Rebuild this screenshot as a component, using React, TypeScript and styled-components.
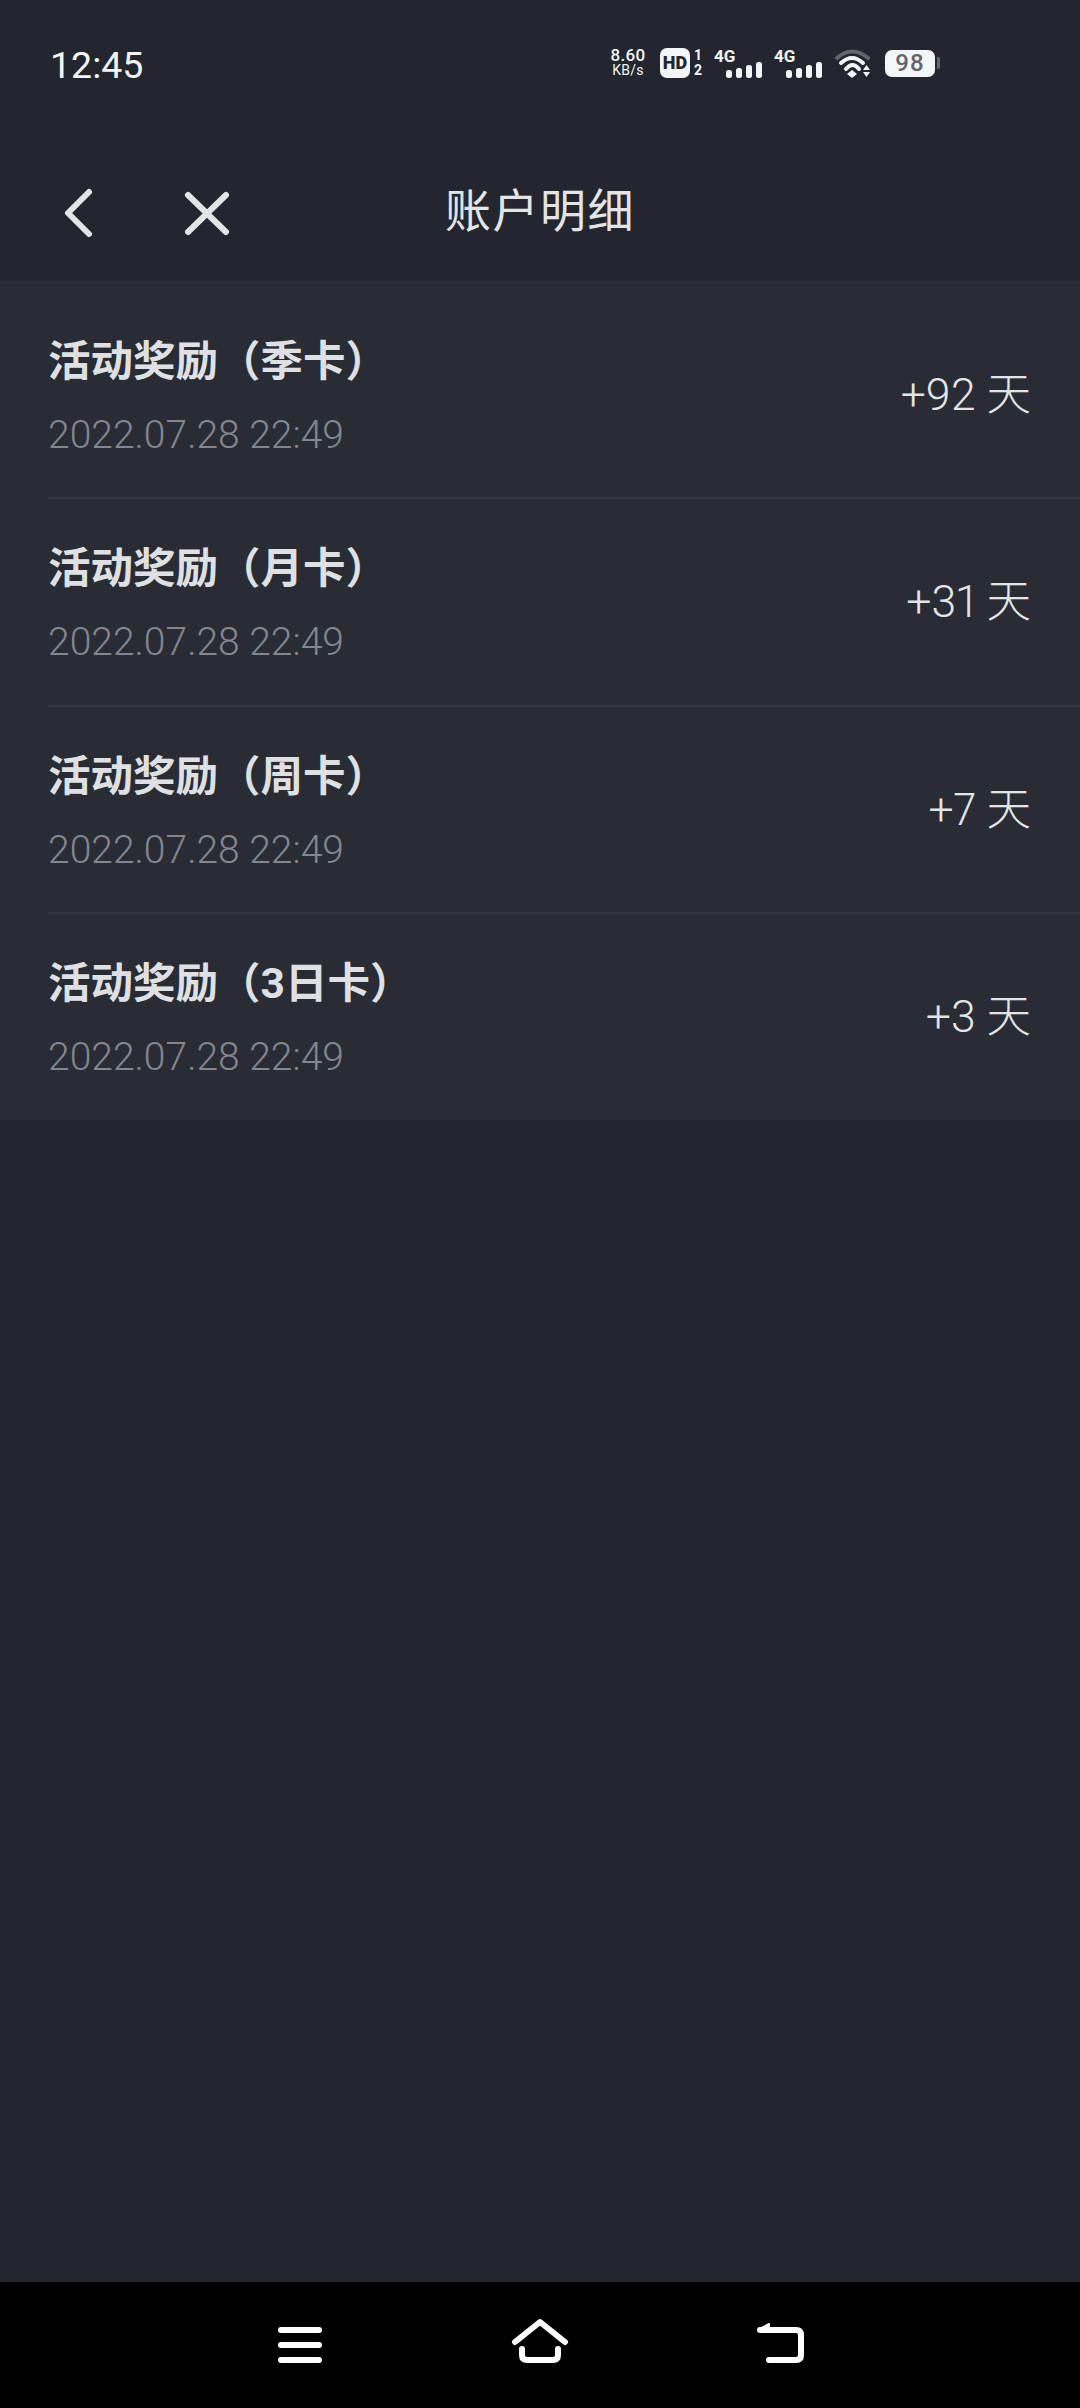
import React from "react";
import styled, { createGlobalStyle } from "styled-components";

const Global = createGlobalStyle`
  html, body { margin: 0; padding: 0; background: #23262f; }
  * { box-sizing: border-box; }
`;

const FONT = `Roboto, "Noto Sans CJK SC", sans-serif`;

const Page = styled.div`
  width: 1080px;
  height: 2408px;
  display: flex;
  flex-direction: column;
  background: #23262f;
  font-family: ${FONT};
  overflow: hidden;
`;

const StatusBar = styled.div`
  height: 100px;
  flex: none;
  display: flex;
  align-items: center;
  padding: 26px 0 0 50px;
  color: #f4f5f6;
`;

const Clock = styled.div`
  font-size: 37.5px;
  line-height: 44px;
  width: 558px;
  font-weight: 400;
  padding-top: 3px;
`;

const Indicators = styled.div`
  display: flex;
  align-items: center;
  height: 30px;
`;

const Speed = styled.div`
  width: 40px;
  display: flex;
  flex-direction: column;
  align-items: center;
  font-size: 17px;
  line-height: 15px;
  font-weight: 500;
  letter-spacing: 0.3px;
  small {
    font-size: 14px;
    font-weight: 400;
  }
`;

const HdBadge = styled.div`
  margin-left: 12px;
  width: 30px;
  height: 30px;
  border-radius: 7px;
  background: #f4f5f6;
  color: #23262f;
  font-size: 18px;
  line-height: 30px;
  font-weight: 900;
  text-align: center;
`;

const SimSlots = styled.div`
  margin-left: 3px;
  width: 10px;
  display: flex;
  flex-direction: column;
  font-size: 14px;
  line-height: 15px;
  font-weight: 700;
  text-align: center;
`;

const Signal = styled.div<{ $gap: number }>`
  position: relative;
  margin-left: ${(p) => p.$gap}px;
  width: 48px;
  height: 30px;
  svg {
    position: absolute;
    left: 12px;
    bottom: 0;
  }
`;

const SignalLabel = styled.span`
  position: absolute;
  left: 0;
  top: -1px;
  font-size: 17px;
  line-height: 18px;
  font-weight: 700;
`;

const BatteryBody = styled.div`
  width: 50px;
  height: 27px;
  border-radius: 7px;
  background: #f4f5f6;
  color: #62656b;
  font-size: 24px;
  line-height: 27px;
  font-weight: 500;
  text-align: center;
  letter-spacing: 1px;
`;

const BatteryCap = styled.div`
  width: 3px;
  height: 12px;
  margin-left: 2px;
  border-radius: 0 2px 2px 0;
  background: #62656b;
`;

const WifiIcon = styled.svg`
  display: block;
  margin-left: 13px;
  margin-right: 14px;
`;

const Header = styled.header`
  height: 181px;
  flex: none;
  position: relative;
  display: flex;
  align-items: center;
  justify-content: center;
  padding-top: 41px;
`;

const Title = styled.h1`
  margin: 0;
  font-size: 46px;
  line-height: 60px;
  font-weight: 400;
  color: #e3e4e6;
  letter-spacing: 1.5px;
`;

const HeaderIcon = styled.svg<{ $left: number }>`
  position: absolute;
  left: ${(p) => p.$left}px;
  top: 85px;
`;

const List = styled.main`
  background: #292c35;
  padding-top: 11px;
  flex: none;
  height: 839px;
`;

const Row = styled.div<{ $last?: boolean }>`
  height: 207.3px;
  margin-left: 48px;
  padding: 42px 49px 0 0;
  display: flex;
  justify-content: space-between;
  align-items: flex-start;
  border-bottom: ${(p) => (p.$last ? "none" : "2px solid #32353e")};
`;

const RowText = styled.div`
  display: flex;
  flex-direction: column;
`;

const RowTitle = styled.div`
  font-size: 42.5px;
  line-height: 56px;
  font-weight: 700;
  color: #dfe0e3;
`;

const RowDate = styled.div`
  margin-top: 23px;
  font-size: 39px;
  line-height: 44px;
  font-weight: 300;
  color: #83868e;
`;

const Amount = styled.div`
  margin-top: 33px;
  font-size: 44.5px;
  line-height: 56px;
  font-weight: 300;
  color: #e3e4e6;
  font-variant-numeric: proportional-nums;
`;

const Spacer = styled.div`
  flex: 1;
`;

const NavBar = styled.nav`
  height: 126px;
  flex: none;
  background: #000;
  position: relative;
`;

const NavIcon = styled.svg<{ $left: number; $top: number }>`
  position: absolute;
  left: ${(p) => p.$left}px;
  top: ${(p) => p.$top}px;
`;

const rows = [
  { title: "活动奖励（季卡）", amount: "+92 天" },
  { title: "活动奖励（月卡）", amount: "+31 天" },
  { title: "活动奖励（周卡）", amount: "+7 天" },
  { title: "活动奖励（3日卡）", amount: "+3 天" },
];

const Bars = () => (
  <svg width="36" height="16" viewBox="0 0 36 16" fill="#f4f5f6">
    <rect x="0" y="8" width="6" height="8" rx="2.5" />
    <rect x="10" y="6" width="6" height="10" rx="2.5" />
    <rect x="20" y="3" width="6" height="13" rx="2.5" />
    <rect x="30" y="0" width="6" height="16" rx="2.5" />
  </svg>
);

export default function App() {
  return (
    <Page>
      <Global />
      <StatusBar>
        <Clock>12:45</Clock>
        <Indicators>
          <Speed>
            8.60
            <small>KB/s</small>
          </Speed>
          <HdBadge>HD</HdBadge>
          <SimSlots>
            <span>1</span>
            <span>2</span>
          </SimSlots>
          <Signal $gap={11}>
            <SignalLabel>4G</SignalLabel>
            <Bars />
          </Signal>
          <Signal $gap={12}>
            <SignalLabel>4G</SignalLabel>
            <Bars />
          </Signal>
          <WifiIcon width="36" height="30" viewBox="0 0 36 30" fill="none">
            <path d="M2 10Q17 -3 33 10" stroke="#62656b" strokeWidth="4" strokeLinecap="round" />
            <path d="M6 15Q17 5 28 15" stroke="#f4f5f6" strokeWidth="4" strokeLinecap="round" />
            <path d="M11 21Q17.5 13 24 21" stroke="#f4f5f6" strokeWidth="4" strokeLinecap="round" />
            <path d="M12 26L17 22L22 26L17 30Z" fill="#f4f5f6" />
            <path d="M28 22L31.5 17L35 22ZM28 24L31.5 29L35 24Z" fill="#f4f5f6" />
          </WifiIcon>
          <BatteryBody>98</BatteryBody>
          <BatteryCap />
        </Indicators>
      </StatusBar>
      <Header>
        <HeaderIcon $left={60} width="38" height="56" viewBox="0 0 38 56" fill="none">
          <path d="M29 7L8 28L29 49" stroke="#e3e4e6" strokeWidth="6" strokeLinecap="round" strokeLinejoin="round" />
        </HeaderIcon>
        <HeaderIcon $left={180} width="54" height="56" viewBox="0 0 54 56" fill="none">
          <path d="M8 10L46 47M46 10L8 47" stroke="#e3e4e6" strokeWidth="6" strokeLinecap="round" />
        </HeaderIcon>
        <Title>账户明细</Title>
      </Header>
      <List>
        {rows.map((r, i) => (
          <Row key={r.title} $last={i === rows.length - 1}>
            <RowText>
              <RowTitle>{r.title}</RowTitle>
              <RowDate>2022.07.28 22:49</RowDate>
            </RowText>
            <Amount>{r.amount}</Amount>
          </Row>
        ))}
      </List>
      <Spacer />
      <NavBar>
        <NavIcon $left={274} $top={40} width="52" height="46" viewBox="0 0 52 46" fill="none">
          <path d="M7 8H45M7 23H45M7 38H45" stroke="#fff" strokeWidth="6" strokeLinecap="round" />
        </NavIcon>
        <NavIcon $left={510} $top={36} width="60" height="48" viewBox="0 0 60 48" fill="none">
          <path d="M5 24L30 4L55 24" stroke="#fff" strokeWidth="6" strokeLinecap="round" strokeLinejoin="round" />
          <path d="M12 31V37Q12 42 17 42H43Q48 42 48 37V31" stroke="#fff" strokeWidth="6" strokeLinecap="round" />
        </NavIcon>
        <NavIcon $left={754} $top={36} width="52" height="48" viewBox="0 0 52 48" fill="none">
          <path d="M6 12H42Q47 12 47 17V37Q47 42 42 42H15" stroke="#fff" strokeWidth="6" strokeLinecap="round" />
          <path d="M15 6L4 12L15 14Z" fill="#fff" stroke="#fff" strokeWidth="2" strokeLinejoin="round" />
        </NavIcon>
      </NavBar>
    </Page>
  );
}
